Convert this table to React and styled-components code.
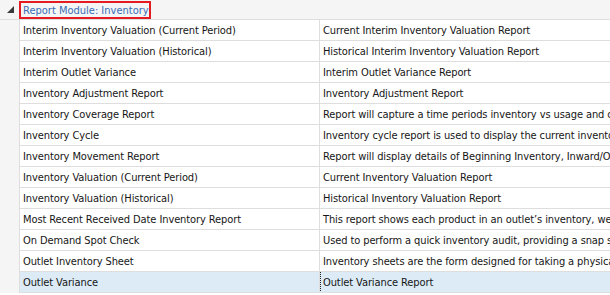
import React from "react";
import styled, { createGlobalStyle } from "styled-components";

const Global = createGlobalStyle`
  html, body { margin: 0; padding: 0; background: #ffffff; }
  body { font-family: "DejaVu Sans Condensed", "DejaVu Sans", sans-serif; font-size: 11px; color: #161616; }
  * { box-sizing: border-box; }
`;

const Grid = styled.div`
  width: 610px;
  height: 295px;
  overflow: hidden;
  background: #ffffff;
`;

const GroupRow = styled.div`
  display: flex;
  align-items: center;
  height: 20px;
  background: #f5f5f5;
  border-bottom: 1px solid #dedede;
`;

const Expander = styled.div`
  width: 19px;
  height: 19px;
  display: flex;
  align-items: center;
  justify-content: center;
  padding-left: 1px;
`;

const GroupLabel = styled.div`
  height: 18px;
  margin-top: 1px;
  width: 132px;
  border: 2px solid #e41b23;
  color: #3b6db5;
  display: flex;
  align-items: center;
  padding-left: 2px;
  white-space: nowrap;
  line-height: 1;
`;

const Body = styled.div`
  display: flex;
`;

const Gutter = styled.div`
  width: 19px;
  flex: none;
  background: #f5f5f5;
`;

const Rows = styled.div`
  flex: 1;
  min-width: 0;
`;

const Row = styled.div`
  display: grid;
  grid-template-columns: 300px 1fr;
  height: 21px;
  border-bottom: 1px solid #dedede;
  background: ${(p) => (p.$selected ? "#dcebf6" : "#ffffff")};
`;

const Cell = styled.div`
  border-left: 1px solid #dedede;
  padding-left: 3px;
  display: flex;
  align-items: center;
  white-space: nowrap;
  overflow: hidden;
  letter-spacing: -0.1px;
  position: relative;
  ${(p) =>
    p.$focused &&
    `
    &::after {
      content: "";
      position: absolute;
      left: 0; top: -1px; right: -4px; bottom: -1px;
      border: 1px dotted #222;
    }
  `}
`;

const rows = [
  ["Interim Inventory Valuation (Current Period)", "Current Interim Inventory Valuation Report"],
  ["Interim Inventory Valuation (Historical)", "Historical Interim Inventory Valuation Report"],
  ["Interim Outlet Variance", "Interim Outlet Variance Report"],
  ["Inventory Adjustment Report", "Inventory Adjustment Report"],
  ["Inventory Coverage Report", "Report will capture a time periods inventory vs usage and ca"],
  ["Inventory Cycle", "Inventory cycle report is used to display the current invento"],
  ["Inventory Movement Report", "Report will display details of Beginning Inventory, Inward/O"],
  ["Inventory Valuation (Current Period)", "Current Inventory Valuation Report"],
  ["Inventory Valuation (Historical)", "Historical Inventory Valuation Report"],
  ["Most Recent Received Date Inventory Report", "This report shows each product in an outlet\u2019s inventory, wel"],
  ["On Demand Spot Check", "Used to perform a quick inventory audit, providing a snap sh"],
  ["Outlet Inventory Sheet", "Inventory sheets are the form designed for taking a physica"],
  ["Outlet Variance", "Outlet Variance Report"],
];

export default function App() {
  return (
    <>
      <Global />
      <Grid>
        <GroupRow>
          <Expander>
            <svg width="7" height="7" viewBox="0 0 7 7">
              <polygon points="7,0 7,7 0,7" fill="#3a3a3a" />
            </svg>
          </Expander>
          <GroupLabel>Report Module: Inventory</GroupLabel>
        </GroupRow>
        <Body>
          <Gutter />
          <Rows>
            {rows.map(([name, desc], i) => {
              const sel = i === rows.length - 1;
              return (
                <Row key={name} $selected={sel}>
                  <Cell>{name}</Cell>
                  <Cell $focused={sel}>{desc}</Cell>
                </Row>
              );
            })}
          </Rows>
        </Body>
      </Grid>
    </>
  );
}
